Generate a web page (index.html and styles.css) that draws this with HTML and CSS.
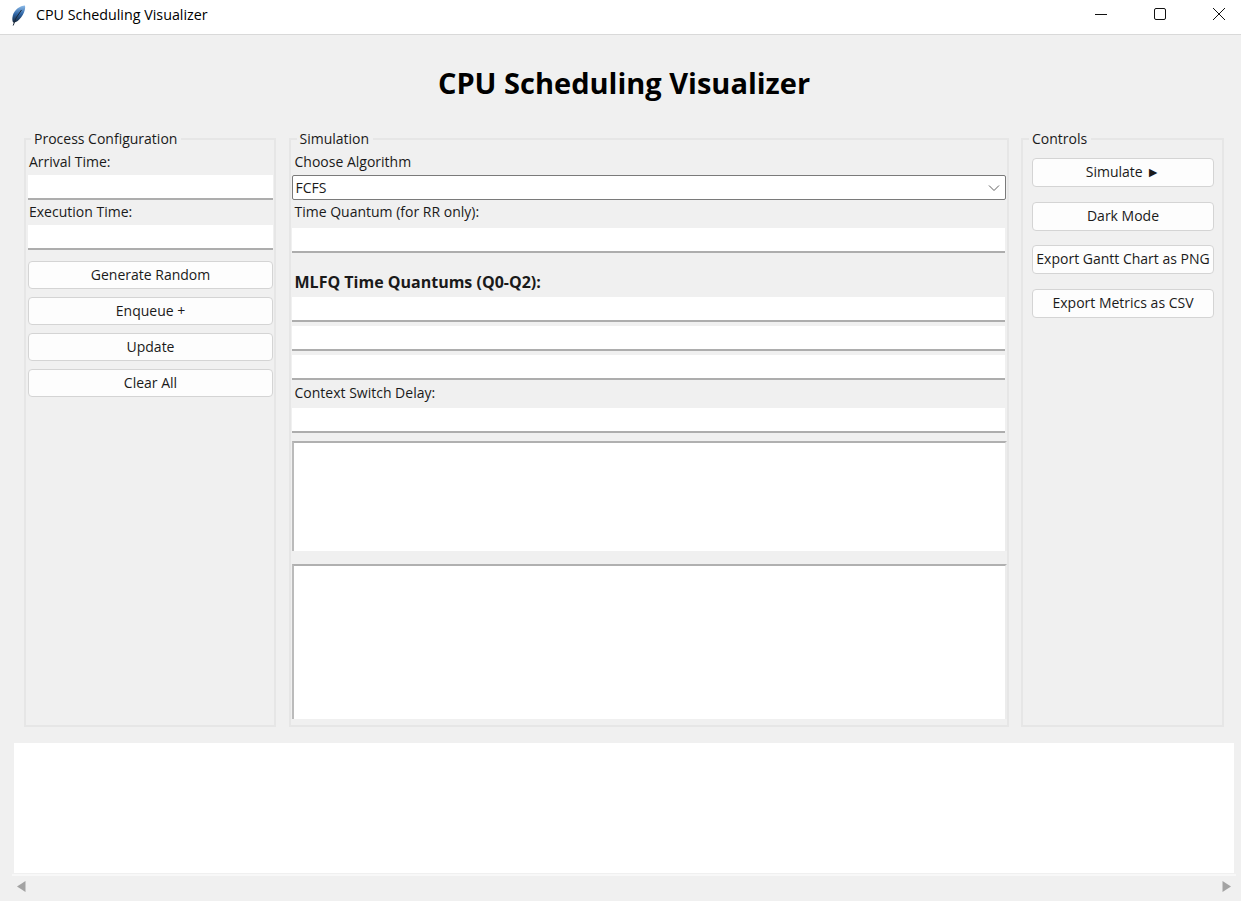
FILE: index.html
```html
<!DOCTYPE html>
<html>
<head>
  <title>CPU Scheduling Visualizer</title>
  <link rel="stylesheet" href="styles.css">
</head>
<body>
  <header class="titlebar">
    <svg class="app-icon" width="15" height="21" viewBox="0 0 15 21">
      <defs>
        <linearGradient id="feather" x1="0" y1="0" x2="0" y2="1">
          <stop offset="0" stop-color="#8fbdea"/>
          <stop offset="0.5" stop-color="#2f66a6"/>
          <stop offset="1" stop-color="#14263c"/>
        </linearGradient>
      </defs>
      <path d="M14 .5C9 .8 3.500 4.500 1.800 10.500 1 13.500 1.200 16 2.200 17.500 4 17.800 6 16.800 8 14.800 11 11.800 13 8.500 13.800 5 14.200 3.300 14.300 1.800 14 .5Z" fill="url(#feather)"/>
      <path d="M10.500 5 5 13 2.200 20.500" fill="none" stroke="#1c2a3a" stroke-width="1"/>
    </svg>
    <span class="app-name">CPU Scheduling Visualizer</span>
    <div class="window-buttons">
      <svg width="14" height="14" viewBox="0 0 14 14"><path d="M1 7.500H13" stroke="#111" stroke-width="1"/></svg>
      <svg width="14" height="14" viewBox="0 0 14 14"><rect x="1.500" y="1.500" width="11" height="11" rx="1.500" fill="none" stroke="#111" stroke-width="1"/></svg>
      <svg width="14" height="14" viewBox="0 0 14 14"><path d="M1 1 13 13M13 1 1 13" stroke="#111" stroke-width="1"/></svg>
    </div>
  </header>

  <h1 class="page-title">CPU Scheduling Visualizer</h1>

  <main class="panels">
    <fieldset class="panel panel-process">
      <legend>Process Configuration</legend>
      <label class="first-label">Arrival Time:</label>
      <input type="text" class="entry">
      <label>Execution Time:</label>
      <input type="text" class="entry">
      <div class="button-stack">
        <button>Generate Random</button>
        <button>Enqueue +</button>
        <button>Update</button>
        <button>Clear All</button>
      </div>
    </fieldset>

    <fieldset class="panel panel-sim">
      <legend>Simulation</legend>
      <label class="first-label">Choose Algorithm</label>
      <div class="combo">
        <span>FCFS</span>
        <svg width="12" height="8" viewBox="0 0 12 8"><path d="M1 1.500 6 6.500 11 1.500" fill="none" stroke="#606060" stroke-width="1"/></svg>
      </div>
      <label>Time Quantum (for RR only):</label>
      <input type="text" class="entry quantum">
      <label class="bold-label">MLFQ Time Quantums (Q0-Q2):</label>
      <div class="mlfq">
        <input type="text" class="entry">
        <input type="text" class="entry">
        <input type="text" class="entry">
      </div>
      <label>Context Switch Delay:</label>
      <input type="text" class="entry delay">
      <textarea class="text-box box-small"></textarea>
      <textarea class="text-box box-large"></textarea>
    </fieldset>

    <fieldset class="panel panel-controls">
      <legend>Controls</legend>
      <div class="control-stack">
        <button>Simulate ►</button>
        <button>Dark Mode</button>
        <button>Export Gantt Chart as PNG</button>
        <button>Export Metrics as CSV</button>
      </div>
    </fieldset>
  </main>

  <section class="chart"></section>
  <div class="scrollbar">
    <svg width="9" height="11" viewBox="0 0 9 11"><path d="M8.500 0V11L0 5.500Z" fill="#a3a3a3"/></svg>
    <svg width="9" height="11" viewBox="0 0 9 11"><path d="M.5 0V11L9 5.500Z" fill="#a3a3a3"/></svg>
  </div>
</body>
</html>
```

FILE: styles.css
```css
* {
  box-sizing: border-box;
}
html, body {
  height: 100%;
}
body {
  margin: 0;
  background-color: #f0f0f0;
  font-family: "Open Sans", "Noto Sans", sans-serif;
  font-size: 14px;
  color: #1a1a1a;
  overflow: hidden;
}

.titlebar {
  display: flex;
  align-items: center;
  height: 35px;
  padding: 0 0 6px 11px;
  background-color: #fff;
  border-bottom: 1px solid #d9d9d9;
}
.app-icon {
  margin-top: 2px;
}
.app-name {
  margin-left: 10px;
  font-size: 14.300px;
  color: #000;
}
.window-buttons {
  display: flex;
  gap: 45px;
  margin-left: auto;
  margin-right: 15px;
}

.page-title {
  margin: 0;
  height: 95px;
  padding: 29px 0 0 7px;
  text-align: center;
  font-size: 29px;
  line-height: 38px;
  font-weight: 700;
  color: #000;
}

.panels {
  display: grid;
  grid-template-columns: 252px 720px 203px;
  column-gap: 12.500px;
  height: 597px;
  padding-left: 24px;
}
.panel {
  margin: 0;
  min-width: 0;
  border: 2px solid #e6e6e6;
}
.panel legend {
  padding: 0 4px 0 3px;
  line-height: 18px;
}
.panel-process {
  padding: 0 1px 0 2px;
}
.panel-process legend {
  margin-left: 3px;
}
.panel-process label {
  padding-left: 1px;
}
.panel-sim {
  padding: 0 1px;
}
.panel-sim legend {
  margin-left: 5px;
}
.panel-sim label {
  padding-left: 3px;
}
.panel-controls {
  padding: 0 3px;
}
.panel-controls legend {
  margin-left: 3px;
  padding-left: 3px;
}

label {
  display: block;
  height: 25px;
  padding-top: 3px;
  line-height: 18px;
}
.first-label {
  height: 27px;
  padding-top: 5px;
}
.bold-label {
  margin-top: 17px;
  height: 27px;
  font-weight: 700;
  font-size: 16px;
}

.entry {
  display: block;
  width: 100%;
  height: 25px;
  padding: 0 2px;
  border: none;
  border-bottom: 2px solid #adadad;
  border-radius: 0;
  background-color: #fff;
  outline: none;
}
.panel-sim .entry {
  width: calc(100% - 1px);
}
.quantum {
  margin-top: 3px;
}
.delay {
  margin-top: 3px;
}
.mlfq {
  display: flex;
  flex-direction: column;
  gap: 4px;
}
.mlfq + label {
  padding-top: 4px;
}

.combo {
  display: flex;
  align-items: center;
  justify-content: space-between;
  height: 25px;
  padding: 0 5px 0 3px;
  background-color: #fff;
  border: 1px solid #7a7a7a;
  border-radius: 2px;
}

.text-box {
  display: block;
  width: calc(100% + 1px);
  margin-top: 8px;
  padding: 0;
  border: none;
  border-top: 2px solid #b0b0b0;
  border-left: 2px solid #bbb;
  border-right: 2px solid #ececec;
  border-radius: 0;
  background-color: #fff;
  resize: none;
  outline: none;
}
.box-small {
  height: 110px;
}
.box-large {
  margin-top: 13px;
  height: 155px;
}

button {
  display: block;
  width: 100%;
  height: 28px;
  padding: 0 0 2px;
  background-color: #fdfdfd;
  border: 1px solid #d4d4d4;
  border-radius: 4px;
  font: inherit;
  color: #1a1a1a;
}
.button-stack {
  display: flex;
  flex-direction: column;
  gap: 8px;
  margin-top: 11px;
}
.control-stack {
  display: flex;
  flex-direction: column;
  gap: 14.670px;
  margin-top: 10px;
  padding: 0 5px 0 6px;
}
.control-stack button {
  height: 29px;
}

.chart {
  height: 130px;
  margin: 16px 7px 0 14px;
  background-color: #fff;
}
.scrollbar {
  display: flex;
  justify-content: space-between;
  align-items: center;
  margin: 1px 5px 0 12px;
  height: 27px;
  padding: 0 5px 5px 5px;
  border-top: 2px solid #f8f8f8;
}
```
